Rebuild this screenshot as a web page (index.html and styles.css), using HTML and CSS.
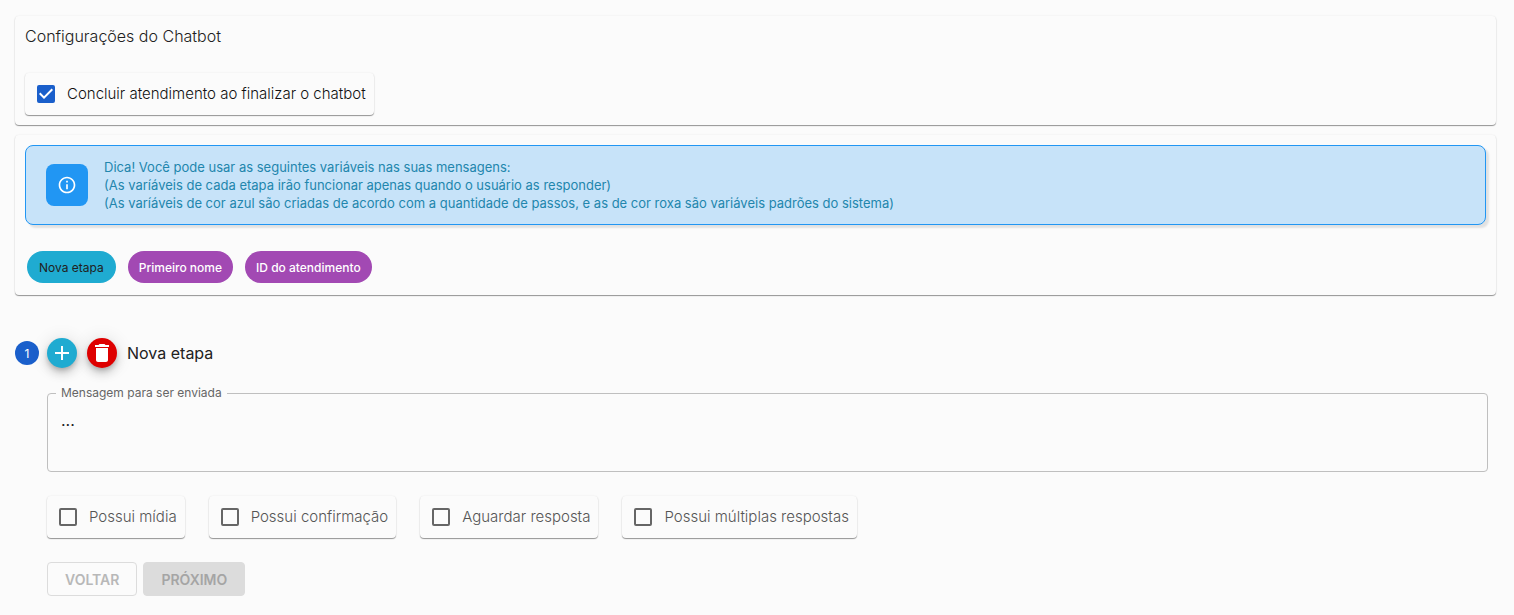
FILE: index.html
```html
<!DOCTYPE html>
<html lang="pt-BR">
<head>
<meta charset="utf-8">
<meta name="viewport" content="width=device-width, initial-scale=1">
<title>Configurações do Chatbot</title>
<link rel="stylesheet" href="styles.css">
</head>
<body>
<main class="page">
  <section class="card">
    <h1 class="card-title">Configurações do Chatbot</h1>
    <label class="check check-strong"><input class="check-input" type="checkbox" checked><span>Concluir atendimento ao finalizar o chatbot</span></label>
  </section>

  <section class="card">
    <div class="tip">
      <span class="tip-icon">
        <svg width="20" height="20" viewBox="0 0 24 24" aria-hidden="true"><path fill="currentColor" d="M11 7h2v2h-2zm0 4h2v6h-2zm1-9C6.480 2 2 6.480 2 12s4.480 10 10 10 10-4.480 10-10S17.520 2 12 2zm0 18c-4.410 0-8-3.590-8-8s3.590-8 8-8 8 3.590 8 8-3.590 8-8 8z"/></svg>
      </span>
      <p class="tip-text">Dica! Você pode usar as seguintes variáveis nas suas mensagens:<br>(As varíáveis de cada etapa irão funcionar apenas quando o usuário as responder)<br>(As varíáveis de cor azul são criadas de acordo com a quantidade de passos, e as de cor roxa são variáveis padrões do sistema)</p>
    </div>
    <div class="chips">
      <button class="chip chip-step" type="button">Nova etapa</button>
      <button class="chip" type="button">Primeiro nome</button>
      <button class="chip" type="button">ID do atendimento</button>
    </div>
  </section>

  <section class="step">
    <header class="step-header">
      <span class="step-number">1</span>
      <button class="round round-add" type="button" aria-label="Adicionar etapa">
        <svg width="24" height="24" viewBox="0 0 24 24" aria-hidden="true"><path fill="currentColor" d="M19 13h-6v6h-2v-6H5v-2h6V5h2v6h6v2z"/></svg>
      </button>
      <button class="round round-delete" type="button" aria-label="Excluir etapa">
        <svg width="24" height="24" viewBox="0 0 24 24" aria-hidden="true"><path fill="currentColor" d="M6 19c0 1.100.9 2 2 2h8c1.100 0 2-.9 2-2V7H6v12zM19 4h-3.500l-1-1h-5l-1 1H5v2h14V4z"/></svg>
      </button>
      <h2 class="step-title">Nova etapa</h2>
    </header>
    <div class="step-body">
      <fieldset class="field">
        <legend class="field-legend"><label for="message">Mensagem para ser enviada</label></legend>
        <textarea class="field-input" id="message" rows="2">...</textarea>
      </fieldset>
      <div class="options">
        <label class="check"><input class="check-input" type="checkbox"><span>Possui mídia</span></label>
        <label class="check"><input class="check-input" type="checkbox"><span>Possui confirmação</span></label>
        <label class="check"><input class="check-input" type="checkbox"><span>Aguardar resposta</span></label>
        <label class="check"><input class="check-input" type="checkbox"><span>Possui múltiplas respostas</span></label>
      </div>
      <div class="actions">
        <button class="action action-outline" type="button" disabled>VOLTAR</button>
        <button class="action action-filled" type="button" disabled>PRÓXIMO</button>
      </div>
    </div>
  </section>
</main>
</body>
</html>
```

FILE: styles.css
```css
* { box-sizing: border-box; }

body {
  margin: 0;
  background: #fbfbfb;
  color: #212121;
  font-family: Inter, "Liberation Sans", sans-serif;
}

button, textarea { font: inherit; }

.page {
  display: flex;
  flex-direction: column;
  gap: 10px;
  padding: 16px 18px 16px 15px;
}

.card {
  display: flex;
  flex-direction: column;
  padding: 10px;
  border-radius: 4px;
  box-shadow: 0 1px 1px rgba(0, 0, 0, .4), 0 0 2px rgba(0, 0, 0, .08);
  background: #fbfbfb;
}

.card-title {
  margin: 0 0 26px;
  font-size: 16px;
  line-height: 21px;
  font-weight: 300;
}

.check {
  display: flex;
  align-items: center;
  align-self: flex-start;
  gap: 12px;
  min-height: 42px;
  padding: 0 8px 0 12px;
  border-radius: 4px;
  box-shadow: 0 1px 1px rgba(0, 0, 0, .4), 0 0 2px rgba(0, 0, 0, .08);
  background: #fbfbfb;
  color: #555;
  font-size: 15px;
  font-weight: 300;
  line-height: 20px;
}

.check-strong { color: #111; }

.check-input {
  appearance: none;
  flex: none;
  width: 18px;
  height: 18px;
  margin: 0;
  border: 2px solid #666;
  border-radius: 2px;
}

.check-input:checked {
  border-color: #1a5fcb;
  background: #1a5fcb url("data:image/svg+xml,%3Csvg xmlns='http://www.w3.org/2000/svg' viewBox='3 3 18 18'%3E%3Cpath fill='white' d='M10 17l-5-5 1.410-1.410L10 14.170l7.590-7.590L19 8l-9 9z'/%3E%3C/svg%3E") center / 18px 18px no-repeat;
  background-origin: border-box;
}

.tip {
  display: flex;
  align-items: center;
  gap: 16px;
  padding: 12px 20px;
  border: 1px solid #2196f3;
  border-radius: 8px;
  box-shadow: 3px 3px 2px rgba(0, 0, 0, .1);
  background: #c7e3f9;
  color: #2286ad;
}

.tip-icon {
  display: grid;
  place-items: center;
  flex: none;
  width: 42px;
  height: 42px;
  border-radius: 8px;
  background: #2196f3;
  color: #fff;
}

.tip-text {
  margin: 0;
  font-size: 13px;
  line-height: 18px;
}

.chips {
  display: flex;
  flex-wrap: wrap;
  gap: 12px;
  padding: 26px 2px 2px;
}

.chip {
  height: 32px;
  padding: 0 11px;
  border: 0;
  border-radius: 16px;
  background: #a249b3;
  color: #fff;
  font-size: 12px;
  font-weight: 500;
}

.chip-step {
  padding: 0 12px;
  background: #1fabd1;
  color: #212121;
  font-weight: 400;
}

.step { padding-top: 33px; }

.step-header {
  display: flex;
  align-items: center;
  gap: 10px;
}

.step-number {
  display: grid;
  place-items: center;
  width: 24px;
  height: 24px;
  margin-right: -2px;
  border-radius: 50%;
  background: #1a5fcb;
  color: #fff;
  font-size: 12px;
}

.round {
  display: grid;
  place-items: center;
  width: 30px;
  height: 30px;
  padding: 0;
  border: 0;
  border-radius: 50%;
  box-shadow: 0 3px 5px -1px rgba(0, 0, 0, .2), 0 6px 10px rgba(0, 0, 0, .14), 0 1px 18px rgba(0, 0, 0, .12);
  color: #fff;
}

.round-add { background: #1fabd1; }
.round-delete { background: #de0000; }

.step-title {
  margin: 0;
  font-size: 16px;
  line-height: 24px;
  font-weight: 400;
}

.step-body { padding: 18px 8px 0 32px; }

.field {
  min-width: 0;
  margin: 0;
  padding: 0 8px 8px;
  border: 1px solid #bfbfbf;
  border-radius: 4px;
}

.field-legend {
  padding: 0 5px;
  color: #666;
  font-size: 12px;
  line-height: 14px;
}

.field-input {
  display: block;
  width: 100%;
  height: 63px;
  padding: 8px 5px;
  border: 0;
  outline: 0;
  resize: none;
  background: transparent;
  color: #212121;
  font-size: 16px;
  line-height: 24px;
}

.options {
  display: flex;
  flex-wrap: wrap;
  gap: 24px;
  padding-top: 24px;
}

.actions {
  display: flex;
  gap: 6px;
  padding-top: 24px;
}

.action {
  height: 34px;
  padding: 0 17px;
  border: 1px solid #dcdcdc;
  border-radius: 4px;
  font-size: 14px;
  font-weight: 600;
}

.action-outline {
  background: transparent;
  color: #b8b8b8;
}

.action-filled {
  background: #dcdcdc;
  color: #a5a5a5;
}
```
